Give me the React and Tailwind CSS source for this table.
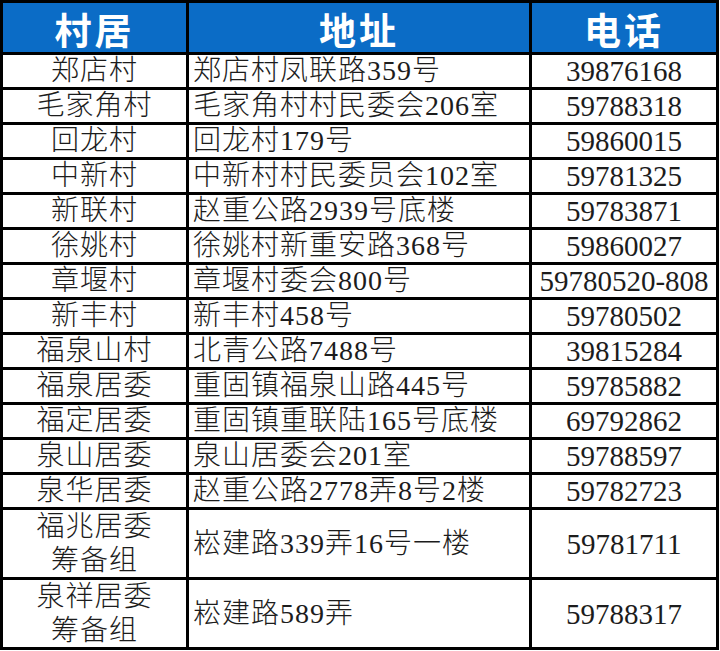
const rows = [
  { name: ["郑店村"], addr: "郑店村凤联路359号", tel: "39876168" },
  { name: ["毛家角村"], addr: "毛家角村村民委会206室", tel: "59788318" },
  { name: ["回龙村"], addr: "回龙村179号", tel: "59860015" },
  { name: ["中新村"], addr: "中新村村民委员会102室", tel: "59781325" },
  { name: ["新联村"], addr: "赵重公路2939号底楼", tel: "59783871" },
  { name: ["徐姚村"], addr: "徐姚村新重安路368号", tel: "59860027" },
  { name: ["章堰村"], addr: "章堰村委会800号", tel: "59780520-808" },
  { name: ["新丰村"], addr: "新丰村458号", tel: "59780502" },
  { name: ["福泉山村"], addr: "北青公路7488号", tel: "39815284" },
  { name: ["福泉居委"], addr: "重固镇福泉山路445号", tel: "59785882" },
  { name: ["福定居委"], addr: "重固镇重联陆165号底楼", tel: "69792862" },
  { name: ["泉山居委"], addr: "泉山居委会201室", tel: "59788597" },
  { name: ["泉华居委"], addr: "赵重公路2778弄8号2楼", tel: "59782723" },
  { name: ["福兆居委", "筹备组"], addr: "崧建路339弄16号一楼", tel: "59781711" },
  { name: ["泉祥居委", "筹备组"], addr: "崧建路589弄", tel: "59788317" },
];

const headers = ["村居", "地址", "电话"];

export default function App() {
  return (
    <div className="w-[720px] h-[651px] bg-white">
      <div className="w-[719px] bg-black p-[3px] grid grid-cols-[183px_340px_184px] gap-[3px] font-[family-name:'Liberation_Serif','Noto_Sans_CJK_SC',serif] text-[28px] font-light text-[#1c1c1c]">
        {headers.map((h) => (
          <div
            key={h}
            className="h-[49px] bg-[#0b6cc6] flex items-center justify-center pt-1 font-[family-name:'Noto_Sans_CJK_SC',sans-serif] font-bold text-[37px] tracking-[3px] text-white"
          >
            {h}
          </div>
        ))}
        {rows.map((r) => {
          const tall = r.name.length > 1;
          const h = tall ? "h-[67px]" : "h-[32px]";
          return [
            <div
              key={r.tel + "n"}
              className={`${h} bg-white flex flex-col items-center justify-center leading-[34px] tracking-[1px]`}
            >
              {r.name.map((n) => (
                <span key={n}>{n}</span>
              ))}
            </div>,
            <div
              key={r.tel + "a"}
              className={`${h} bg-white flex items-center pl-1 leading-[32px] tracking-[1px]`}
            >
              {r.addr}
            </div>,
            <div
              key={r.tel + "t"}
              className={`${h} bg-white flex items-center justify-center leading-[32px] text-[29px] font-[family-name:'Liberation_Serif',serif] font-normal`}
            >
              {r.tel}
            </div>,
          ];
        })}
      </div>
    </div>
  );
}
